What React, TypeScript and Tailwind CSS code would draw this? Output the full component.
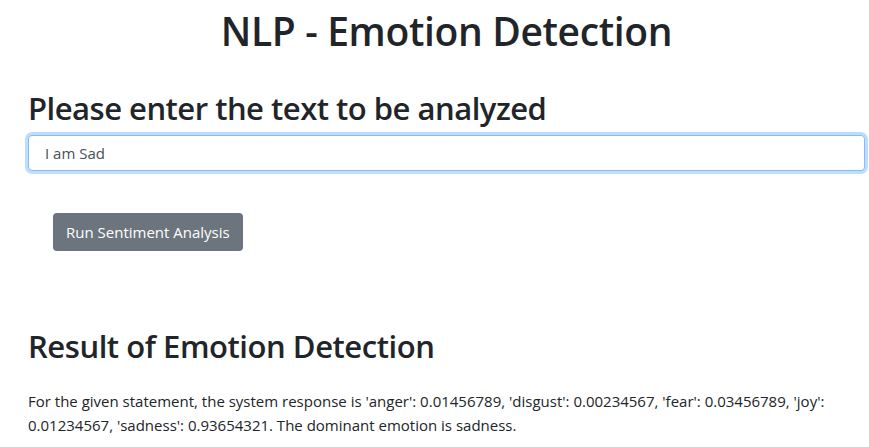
import React from 'react';

// Emotion detection page, Bootstrap-like look
export default function App() {
    const result =
        "For the given statement, the system response is 'anger': 0.01456789, 'disgust': 0.00234567, 'fear': 0.03456789, 'joy': 0.01234567, 'sadness': 0.93654321. The dominant emotion is sadness.";

    return (
        <div className="min-h-[447px] bg-white text-[#212529] font-['Open_Sans',sans-serif] pl-[28px] pr-[4px]">
            <h1 className="text-center text-[39px] tracking-[-0.35px] leading-[48px] font-semibold pt-[7px]">
                NLP - Emotion Detection
            </h1>

            <h2 className="mt-[34px] text-[31px] tracking-[-0.5px] leading-[38px] font-semibold">
                Please enter the text to be analyzed
            </h2>

            <div className="mt-[8px]">
                <input
                    type="text"
                    defaultValue="I am Sad"
                    className="w-full h-[36px] px-[16px] text-[15px] text-[#495057] bg-white border border-[#80bdff] rounded-[4px] outline-none shadow-[0_0_0_3px_rgba(0,123,255,0.25)]"
                />
            </div>

            <div className="mt-[42px] pl-[25px]">
                <button className="h-[38px] px-[13px] rounded-[4px] bg-[#6c757d] text-white text-[15px]">
                    Run Sentiment Analysis
                </button>
            </div>

            <h2 className="mt-[76px] text-[31px] tracking-[-0.45px] leading-[38px] font-semibold">
                Result of Emotion Detection
            </h2>

            <p className="mt-[24px] text-[15px] leading-[24px]">{result}</p>
        </div>
    );
}
